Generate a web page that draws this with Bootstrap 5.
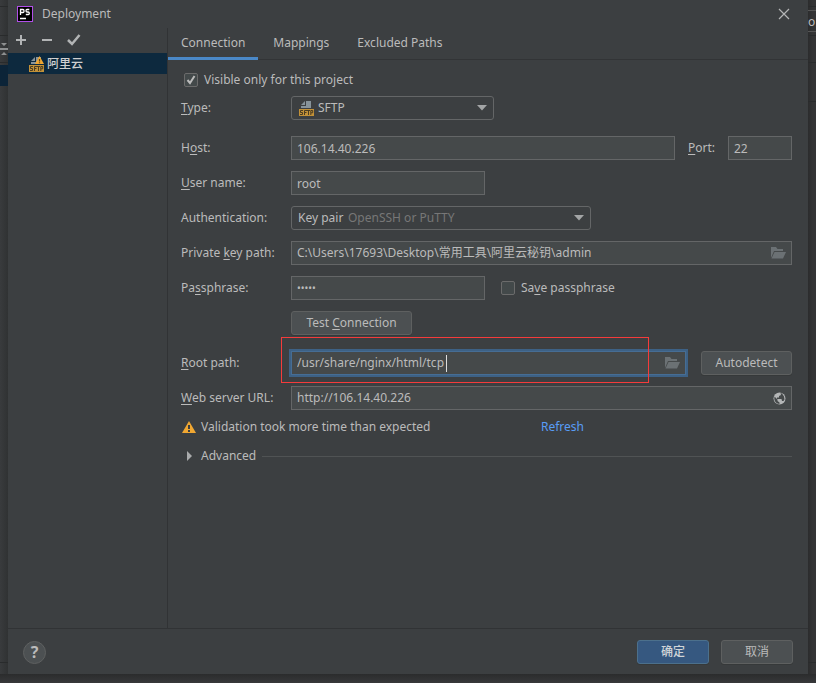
<!DOCTYPE html>
<html lang="zh-CN">
<head>
<meta charset="utf-8">
<meta name="viewport" content="width=device-width, initial-scale=1">
<title>Deployment</title>
<link href="https://cdn.jsdelivr.net/npm/bootstrap@5.3.0/dist/css/bootstrap.min.css" rel="stylesheet">
<style>
  body { background: #323435; color: #bbb; font: 12px/20px "Noto Sans", "Noto Sans CJK SC", sans-serif; }
  u { text-underline-offset: 2px; }
  button, input, select { font: inherit; color: inherit; }
  svg { display: block; flex: none; }
  .edge { width: 8px; flex: none; overflow: hidden; }
  .edge-left { background: linear-gradient(90deg, #393b3d, #303233); }
  .edge-right { background: linear-gradient(90deg, #2b2c2d, #343435 60%); }
  .edge-bottom { height: 9px; background: linear-gradient(#2b2c2d, #37383a); }
  .cell { border-bottom: 1px solid #292b2c; flex: none; }
  .cell-top { height: 7px; } .cell-bar { height: 29px; } .cell-icons { height: 27px; } .cell-tabs { height: 39px; }
  .cell-end { height: 12px; border-top: 1px solid #292b2c; }
  .cell-sel { height: 21px; margin-top: 2px; background: #0c2438; }
  .cell-box { border: solid #555; border-width: 1px 0; height: 22px; line-height: 22px; margin: 3px 0; }
  .dialog { background: #3c3f41; min-width: 0; }
  .titlebar { height: 28px; padding: 0 18px 0 9px; gap: 9px; }
  .plain { background: none; border: 0; padding: 0; }
  .side { width: 160px; flex: none; border-right: 1px solid #313335; }
  .tools { height: 25px; padding: 0 7px; gap: 12px; }
  .tree-item { height: 21px; padding-left: 20px; gap: 3px; background: #0d293e; color: #d0d0d0; font-weight: 500; }
  .tabs { height: 32px; border-bottom: 1px solid #323436; gap: 2px; }
  .tabs button { padding: 0 13px; height: 32px; border-bottom: 3px solid transparent; }
  .tabs button.current { border-bottom-color: #4a88c7; }
  .form-area { padding: 10px 16px 16px 13px; }
  .line { min-height: 24px; margin-bottom: 11px; }
  .line-wide { margin-bottom: 16px; }
  .line > .cap { width: 110px; flex: none; }
  .box { height: 24px; background: #45494a; border: 1px solid #646667; padding: 0 5px; color: #bbb; border-radius: 0; outline: 0; min-width: 0; }
  .box input { background: none; border: 0; outline: 0; padding: 0; min-width: 0; }
  .combo { height: 24px; border: 1px solid #646667; border-radius: 3px; padding: 0 6px; }
  .combo select { appearance: none; background: none; border: 0; padding: 0; outline: 0; }
  .focused { border-color: #466d94; box-shadow: 0 0 0 2px #3d6185; }
  .w-combo { width: 203px; } .w-auth { width: 300px; } .w-short { width: 194px; } .w-port { width: 64px; }
  .row-check { margin-bottom: 6px; padding-left: 3px; }
  .tick { appearance: none; width: 14px; height: 14px; margin: 0; border: 1px solid #6b6b6b; border-radius: 2px; background: #43494a; flex: none; }
  .tick:checked { background: #43494a url("data:image/svg+xml,%3Csvg xmlns='http://www.w3.org/2000/svg' viewBox='0 0 12 12'%3E%3Cpath d='M2.5 6l2.5 3 4.5-7' fill='none' stroke='%23bbb' stroke-width='2'/%3E%3C/svg%3E"); }
  .tick + label { padding-left: 6px; }
  .port-label { width: 53px; padding-left: 13px; flex: none; }
  .push { height: 24px; background: #4c5052; border: 1px solid #5e6060; border-radius: 3px; padding: 0; line-height: 22px; color: #bbb; box-shadow: 0 1px 0 #36393a; flex: none; }
  .push-main { background: #365880; border-color: #4c708c; color: #d0d4d8; font-weight: 500; }
  .push-foot { width: 72px; }
  .push-test { width: 121px; }
  .push-auto { width: 91px; margin-left: 15px; }
  .dim { color: #777; }
  .box.secret { font-family: "Noto Sans", sans-serif; font-size: 10px; letter-spacing: normal; }
  .caret { position: absolute; left: 154px; top: 3px; width: 1px; height: 17px; background: #ddd; }
  .highlight { position: absolute; left: -11px; right: 36px; top: -15px; height: 46px; border: 1px solid #f53b3b; pointer-events: none; }
  .line-url, .note { margin-bottom: 5px; }
  .note-text { width: 340px; }
  .note a { color: #589df6; }
  .rule { height: 1px; background: #505354; margin-left: 6px; }
  .footer { height: 46px; border-top: 1px solid #313335; padding: 1px 15px 0; gap: 12px; }
  .help { width: 23px; height: 23px; border-radius: 50%; background: #4c5052; border: 1px solid #5e6060; font-size: 16px; font-weight: 700; line-height: 20px; }
</style>
</head>
<body class="d-flex flex-column min-vh-100">
<svg width="0" height="0" class="position-absolute" aria-hidden="true">
  <symbol id="sftp" viewBox="0 0 16 16">
    <path d="M8 1h5v7H3V6h5z" fill="#87939a"/><path d="M3 5l4-4v4z" fill="#87939a"/>
    <path d="M1 9h15v7H1z" fill="#c29138"/>
    <path d="M5 10.500H2.500V12.500H4.500V14.500H2M6.500 15V10.500H9M6.500 12.500H8.500M9 10.500H12M10.500 10.500V15M12.800 15V10.500H14.700V12.800H13" fill="none" stroke="#4b3d22"/>
  </symbol>
  <symbol id="folder" viewBox="0 0 16 14">
    <path d="M1 12V1h5l1.500 2H13v2H4z" fill="#6b7174"/><path d="M4.500 6H16l-3 6.500H1.500z" fill="#6b7174"/>
  </symbol>
  <symbol id="down" viewBox="0 0 10 6"><path d="M0 0h10L5 5.500z" fill="#a3a5a6"/></symbol>
</svg>
<div class="d-flex flex-grow-1">
  <div class="edge edge-left d-flex flex-column" aria-hidden="true">
    <div class="cell cell-top"></div>
    <div class="cell cell-bar"></div>
    <div class="cell cell-icons d-flex align-items-center"><svg width="8" height="14" viewBox="0 0 8 14"><path d="M1 1h6L4 4zM0 6h8v2H0zM4 10l3 3H1z" fill="#8d8f90"/></svg></div>
    <div class="cell-sel"></div>
    <div class="cell-end mt-auto"></div>
  </div>
  <main class="dialog flex-grow-1 d-flex flex-column">
    <header class="titlebar d-flex align-items-center">
      <svg width="16" height="16" viewBox="0 0 16 16"><path d="M0 0h16v16H0z" fill="#b04fe8"/><path d="M1 1h14v14H1z" fill="#000"/><path d="M3.500 9V3.500H6Q7 3.500 7 5T6 6.500H4M12.300 3.500H10Q9 3.500 9 4.700T10.200 6H11.300Q12.300 6 12.300 7.200T11.300 8.500H8.800M3 12.500H9" fill="none" stroke="#fff" stroke-width="1.300"/></svg>
      <span class="flex-grow-1">Deployment</span>
      <button class="plain" type="button" aria-label="Close"><svg width="12" height="12" viewBox="0 0 12 12"><path d="M1 1l10 10M11 1L1 11" stroke="#b4b5b6" stroke-width="1.200"/></svg></button>
    </header>
    <div class="d-flex flex-grow-1">
      <aside class="side">
        <div class="tools d-flex align-items-center">
          <button class="plain" type="button" aria-label="Add"><svg width="13" height="16" viewBox="0 0 13 16"><path d="M6 2v10M1 7h10" stroke="#b2b4b5" stroke-width="2"/></svg></button>
          <button class="plain" type="button" aria-label="Remove"><svg width="14" height="16" viewBox="0 0 14 16"><path d="M2 7h10" stroke="#b2b4b5" stroke-width="2"/></svg></button>
          <button class="plain" type="button" aria-label="Use as default"><svg width="15" height="16" viewBox="0 0 15 16"><path d="M2 7l4 4 7.500-9" fill="none" stroke="#b2b4b5" stroke-width="2.500"/></svg></button>
        </div>
        <div class="tree-item d-flex align-items-center">
          <svg width="16" height="16" viewBox="0 0 16 16"><use href="#sftp"/><path d="M11.500 0l4.500 8H7z" fill="#f0a732"/><path d="M11.500 3v2.500M11.500 6.300v1" stroke="#5a4520" stroke-width="1.200"/></svg>
          <span>阿里云</span>
        </div>
      </aside>
      <section class="flex-grow-1">
        <nav class="tabs d-flex">
          <button type="button" class="plain current">Connection</button>
          <button type="button" class="plain">Mappings</button>
          <button type="button" class="plain">Excluded Paths</button>
        </nav>
        <form class="form-area">
          <div class="row-check d-flex align-items-center">
            <input class="tick" type="checkbox" id="vis" checked><label for="vis">Visible only for this project</label>
          </div>
          <div class="line line-wide d-flex align-items-center">
            <label class="cap" for="type"><u>T</u>ype:</label>
            <div class="combo w-combo d-flex align-items-center">
              <svg width="16" height="16"><use href="#sftp"/></svg>
              <select id="type" class="ms-1 flex-grow-1"><option>SFTP</option></select>
              <svg width="10" height="6"><use href="#down"/></svg>
            </div>
          </div>
          <div class="line d-flex align-items-center">
            <label class="cap" for="host">H<u>o</u>st:</label>
            <input class="box flex-grow-1" id="host" value="106.14.40.226">
            <label class="port-label" for="port"><u>P</u>ort:</label>
            <input class="box w-port" id="port" value="22">
          </div>
          <div class="line d-flex align-items-center">
            <label class="cap" for="user"><u>U</u>ser name:</label>
            <input class="box w-short" id="user" value="root">
          </div>
          <div class="line d-flex align-items-center">
            <label class="cap" for="auth">Authentication:</label>
            <div class="combo w-auth d-flex align-items-center">
              <select id="auth"><option>Key pair</option></select>
              <span class="dim ms-1 flex-grow-1">OpenSSH or PuTTY</span>
              <svg width="10" height="6"><use href="#down"/></svg>
            </div>
          </div>
          <div class="line d-flex align-items-center">
            <label class="cap" for="key">Private <u>k</u>ey path:</label>
            <div class="box flex-grow-1 d-flex align-items-center">
              <input class="flex-grow-1" id="key" value="C:\Users\17693\Desktop\常用工具\阿里云秘钥\admin">
              <button class="plain" type="button" aria-label="Browse key"><svg width="16" height="14"><use href="#folder"/></svg></button>
            </div>
          </div>
          <div class="line d-flex align-items-center">
            <label class="cap" for="pass">Pa<u>s</u>sphrase:</label>
            <input class="box w-short secret" type="password" id="pass" value="admin">
            <input class="tick ms-3" type="checkbox" id="save"><label for="save">Sa<u>v</u>e passphrase</label>
          </div>
          <div class="line line-wide d-flex align-items-center">
            <span class="cap"></span>
            <button class="push push-test" type="button">Test <u>C</u>onnection</button>
          </div>
          <div class="line d-flex align-items-center">
            <label class="cap" for="root"><u>R</u>oot path:</label>
            <div class="box focused flex-grow-1 d-flex align-items-center position-relative">
              <input class="flex-grow-1" id="root" value="/usr/share/nginx/html/tcp">
              <button class="plain" type="button" aria-label="Browse root"><svg width="16" height="14"><use href="#folder"/></svg></button>
              <span class="caret"></span><span class="highlight"></span>
            </div>
            <button class="push push-auto" type="button">Autodetect</button>
          </div>
          <div class="line line-url d-flex align-items-center">
            <label class="cap" for="url"><u>W</u>eb server URL:</label>
            <div class="box flex-grow-1 d-flex align-items-center">
              <input class="flex-grow-1" id="url" value="http://106.14.40.226">
              <button class="plain" type="button" aria-label="Open in browser"><svg width="13" height="13" viewBox="0 0 13 13"><circle cx="6.500" cy="6.500" r="6" fill="#b4b6b7"/><path d="M1.500 4.500L4.500 7.500V9L6.500 10.500V12Q2 11.500 1.300 7zM7.500 1.200L8 3 6 4V5.500H4V7L8.500 7 9 9H10.500L11.500 7.500 11 4.500 9 1.500z" fill="#45494a"/></svg></button>
            </div>
          </div>
          <div class="line note d-flex align-items-center">
            <svg width="16" height="14" viewBox="0 0 16 14"><path d="M8 1l7 12H1z" fill="#f0a732"/><path d="M8 5v4M8 10v2" stroke="#3c3f41" stroke-width="2"/></svg>
            <span class="note-text ms-1">Validation took more time than expected</span>
            <a href="#" class="text-decoration-none">Refresh</a>
          </div>
          <div class="line d-flex align-items-center">
            <button type="button" class="plain d-flex align-items-center ps-1" aria-expanded="false"><svg class="me-2" width="8" height="10" viewBox="0 0 8 10"><path d="M2 0l5 5-5 5z" fill="#a9abac"/></svg>Advanced</button>
            <span class="rule flex-grow-1"></span>
          </div>
        </form>
      </section>
    </div>
    <footer class="footer d-flex align-items-center">
      <button class="help plain me-auto" type="button" aria-label="Help">?</button>
      <button class="push push-main push-foot" type="button">确定</button>
      <button class="push push-foot" type="button">取消</button>
    </footer>
  </main>
  <div class="edge edge-right d-flex flex-column" aria-hidden="true">
    <div class="cell cell-top"></div>
    <div class="cell-box">o</div>
    <div class="cell"></div>
    <div class="cell cell-icons"></div>
    <div class="cell cell-tabs"></div>
    <div class="cell-end mt-auto"></div>
  </div>
</div>
<div class="edge-bottom"></div>
<script src="https://cdn.jsdelivr.net/npm/bootstrap@5.3.0/dist/js/bootstrap.bundle.min.js"></script>
</body>
</html>
